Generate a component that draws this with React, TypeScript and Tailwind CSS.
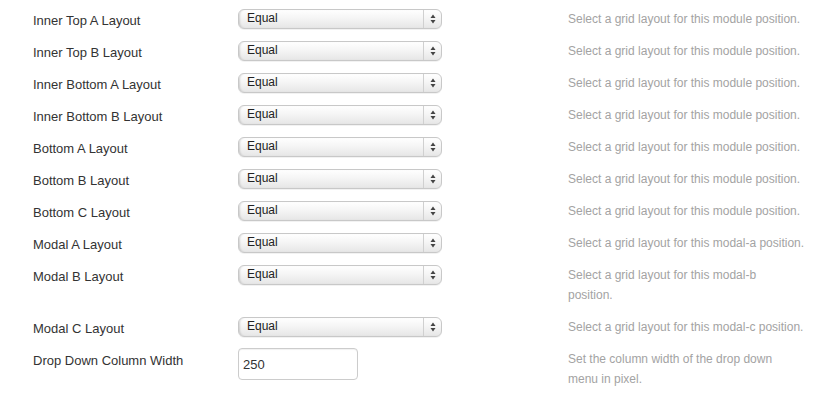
const rows: { label: string; desc: React.ReactNode; kind?: 'input' }[] = [
  { label: 'Inner Top A Layout', desc: 'Select a grid layout for this module position.' },
  { label: 'Inner Top B Layout', desc: 'Select a grid layout for this module position.' },
  { label: 'Inner Bottom A Layout', desc: 'Select a grid layout for this module position.' },
  { label: 'Inner Bottom B Layout', desc: 'Select a grid layout for this module position.' },
  { label: 'Bottom A Layout', desc: 'Select a grid layout for this module position.' },
  { label: 'Bottom B Layout', desc: 'Select a grid layout for this module position.' },
  { label: 'Bottom C Layout', desc: 'Select a grid layout for this module position.' },
  { label: 'Modal A Layout', desc: 'Select a grid layout for this modal-a position.' },
  { label: 'Modal B Layout', desc: <>Select a grid layout for this modal-b<br />position.</> },
  { label: 'Modal C Layout', desc: 'Select a grid layout for this modal-c position.' },
  { label: 'Drop Down Column Width', desc: <>Set the column width of the drop down<br />menu in pixel.</>, kind: 'input' },
];

function SelectBox() {
  return (
    <div className="flex h-[20px] w-[204px] items-stretch rounded-[6px] border border-[#c8c8c8] bg-gradient-to-b from-[#ffffff] via-[#f4f4f4] to-[#e6e6e6] shadow-[inset_2px_0_2px_-1px_rgba(0,0,0,0.15),0_1px_0_rgba(0,0,0,0.05)]">
      <span className="flex-1 pl-[8px] text-[12px] leading-[17px] text-[#222]">Equal</span>
      <span className="flex w-[18px] items-center justify-center border-l border-[#d0d0d0]">
        <svg width="6" height="10" viewBox="0 0 6 10">
          <path d="M3 0.5 L5.5 4 L0.5 4 Z" fill="#444" />
          <path d="M3 9.5 L5.5 6 L0.5 6 Z" fill="#444" />
        </svg>
      </span>
    </div>
  );
}

export default function App() {
  return (
    <div className="min-h-[412px] w-[830px] bg-white pt-[9px] font-['Liberation_Sans',Arial,sans-serif]">
      {rows.map(({ label, desc, kind }) => (
        <div key={label} className="flex items-start pb-[12px]">
          <div className="w-[238px] translate-y-[2px] pl-[33px] text-[13px] leading-[20px] text-[#333]">{label}</div>
          <div className="w-[330px]">
            {kind === 'input' ? (
              <div className="-mt-[1px] flex h-[32px] w-[120px] items-center rounded-[4px] border border-[#cccccc] bg-white pl-[4px] pt-[1px] text-[13px] text-[#333] shadow-[inset_0_1px_1px_rgba(0,0,0,0.06)]">
                250
              </div>
            ) : (
              <SelectBox />
            )}
          </div>
          <div className="whitespace-nowrap text-[12px] leading-[20px] text-[#a3a3a3]">{desc}</div>
        </div>
      ))}
    </div>
  );
}
